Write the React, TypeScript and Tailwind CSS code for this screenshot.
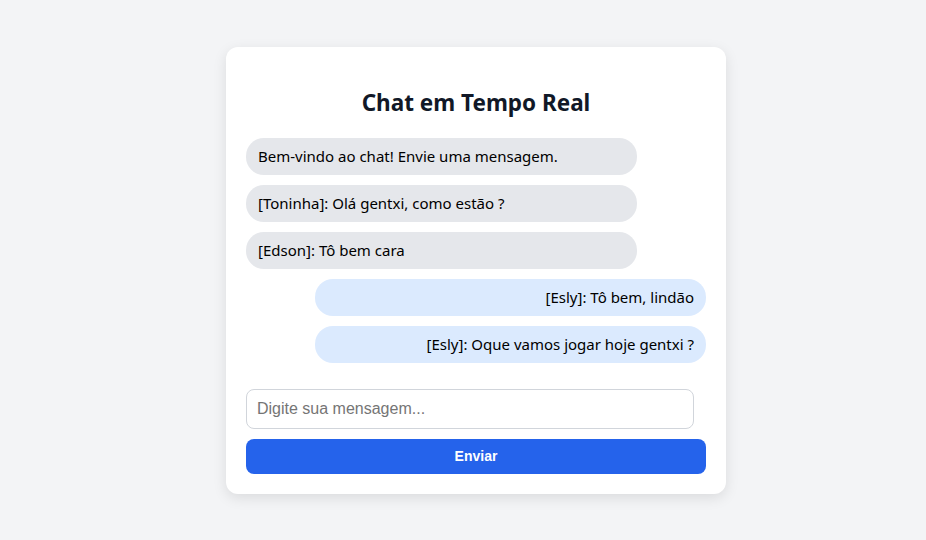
import React from 'react';

type Msg = { text: string; mine: boolean };

const MESSAGES: Msg[] = [
  { text: 'Bem-vindo ao chat! Envie uma mensagem.', mine: false },
  { text: '[Toninha]: Olá gentxi, como estão ?', mine: false },
  { text: '[Edson]: Tô bem cara', mine: false },
  { text: '[Esly]: Tô bem, lindão', mine: true },
  { text: '[Esly]: Oque vamos jogar hoje gentxi ?', mine: true },
];

const Bubble: React.FC<{ msg: Msg }> = ({ msg }) => (
  <div
    className={
      msg.mine
        ? 'self-end w-[391px] h-[37px] flex items-center justify-end px-3 pt-px rounded-[18px] bg-[#dbeafe] text-black'
        : 'self-start w-[391px] h-[37px] flex items-center px-3 pt-px rounded-[18px] bg-[#e5e7eb] text-black'
    }
  >
    {msg.text}
  </div>
);

const App: React.FC = () => {
  return (
    <div className="min-h-screen bg-[#f3f4f6] flex items-center justify-center pl-[26px]">
      <div className="w-[500px] bg-white rounded-xl shadow-[0_4px_14px_rgba(0,0,0,0.1)] p-5 font-['Noto_Sans',sans-serif]">
        <h2 className="mt-5 mb-[19px] text-center text-[22.5px] leading-8 font-bold text-[#111827]">
          Chat em Tempo Real
        </h2>

        <div className="flex flex-col gap-[10px] text-[15px]">
          {MESSAGES.map((m, i) => (
            <Bubble key={i} msg={m} />
          ))}
        </div>

        <input
          type="text"
          placeholder="Digite sua mensagem..."
          className="block mt-[26px] w-[448px] h-[40px] px-[10px] border border-[#d1d5db] rounded-lg font-['Liberation_Sans',sans-serif] text-base placeholder:text-[#757575] outline-none"
        />

        <button className="block mt-[10px] w-full h-[35px] rounded-lg bg-[#2563eb] text-white text-sm font-bold font-['Liberation_Sans',sans-serif]">
          Enviar
        </button>
      </div>
    </div>
  );
};

export default App;
